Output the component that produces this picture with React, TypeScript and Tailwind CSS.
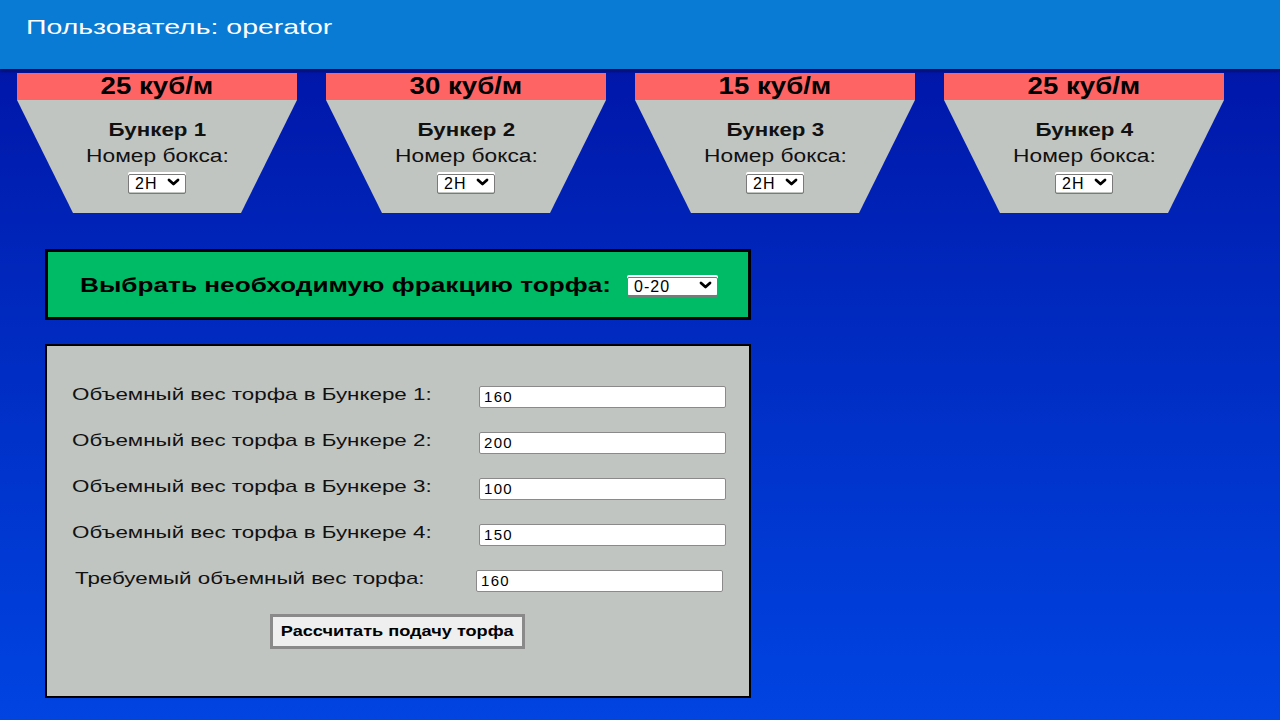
import { useState } from "react";

const bunkers = [
    { id: 1, volume: 25 },
    { id: 2, volume: 30 },
    { id: 3, volume: 15 },
    { id: 4, volume: 25 },
];

const weights = ["160", "200", "100", "150"];

const Chevron = () => (
    <svg
        width="13"
        height="8"
        viewBox="0 0 13 8"
        fill="none"
        stroke="currentColor"
        strokeWidth="2.8"
        strokeLinecap="round"
        strokeLinejoin="round"
        aria-hidden
    >
        <path d="M2 2 6.5 6 11 2" />
    </svg>
);

type SelectProps = {
    value: string;
    options: string[];
    onChange: (v: string) => void;
    className: string;
};

const NativeSelect = ({ value, options, onChange, className }: SelectProps) => (
    <div className={"relative rounded-[2px] bg-white " + className}>
        <select
            value={value}
            onChange={(e) => onChange(e.target.value)}
            className="h-full w-full cursor-pointer appearance-none rounded-[2px] border border-[#7a7a7a] bg-transparent pl-[6px] text-[16px] leading-none tracking-[1px] text-black outline-none"
        >
            {options.map((o) => (
                <option key={o} value={o}>
                    {o}
                </option>
            ))}
        </select>
        <span className="pointer-events-none absolute right-[6px] top-1/2 -translate-y-1/2 text-black">
            <Chevron />
        </span>
    </div>
);

const Bunker = ({ id, volume }: { id: number; volume: number }) => {
    const [box, setBox] = useState("2H");
    return (
        <div className="flex w-[280px] flex-col">
            <div className="h-[27px] bg-[#ff6464] text-center text-[23px] font-bold leading-[27px] text-black">
                <span className="inline-block scale-x-[1.2]">{volume} куб/м</span>
            </div>
            <div className="flex h-[113px] flex-col items-center bg-[#c1c5c1] pt-[18px] [clip-path:polygon(0_0,100%_0,80%_100%,20%_100%)]">
                <div className="text-[18px] font-bold leading-[24px] text-[#111]">
                    <span className="inline-block scale-x-[1.24]">Бункер {id}</span>
                </div>
                <div className="mt-[2px] text-[18px] leading-[24px] text-[#111]">
                    <span className="inline-block scale-x-[1.265]">Номер бокса:</span>
                </div>
                <NativeSelect
                    value={box}
                    options={["2H", "3H", "4H"]}
                    onChange={setBox}
                    className="mt-[4px] h-[20px] w-[58px]"
                />
            </div>
        </div>
    );
};

const Field = ({ label, value, shift }: { label: string; value: string; shift?: boolean }) => (
    <div className={"flex items-center " + (shift ? "pl-[28px]" : "pl-[25px]")}>
        <label className={"text-[17px] leading-[22px] text-[#111] " + (shift ? "w-[401px]" : "w-[407px]")}>
            <span className="inline-block origin-left -translate-y-[2px] scale-x-[1.315]">{label}</span>
        </label>
        <input
            defaultValue={value}
            className="h-[22px] w-[247px] rounded-[2px] border border-[#8a8a8a] bg-white px-[4px] text-[15px] tracking-[1.3px] text-black outline-none"
        />
    </div>
);

export default function App() {
    const [fraction, setFraction] = useState("0-20");

    return (
        <div className="min-h-screen bg-gradient-to-b from-[#0010a4] to-[#0044e2] pb-[22px] font-['Liberation_Sans',Arial,sans-serif]">
            <header className="flex h-[69px] items-start bg-[#0a7bd4] pl-[26px] pt-[13px] shadow-[0_2px_3px_rgba(0,0,30,0.6)]">
                <h1 className="text-[21px] leading-[28px] text-white">
                    <span className="inline-block origin-left scale-x-[1.354]">Пользователь: operator</span>
                </h1>
            </header>

            <div className="mt-[4px] flex gap-[29px] pl-[17px]">
                {bunkers.map((b) => (
                    <Bunker key={b.id} id={b.id} volume={b.volume} />
                ))}
            </div>

            <div className="ml-[45px] mt-[36px] flex h-[71px] w-[706px] items-center border-[3px] border-black bg-[#00bb66] pl-[32px]">
                <span className="w-[547px] text-[20px] font-bold text-black">
                    <span className="inline-block origin-left scale-x-[1.31]">Выбрать необходимую фракцию торфа:</span>
                </span>
                <NativeSelect
                    value={fraction}
                    options={["0-20", "0-40", "10-40"]}
                    onChange={setFraction}
                    className="h-[20px] w-[91px]"
                />
            </div>

            <div className="ml-[45px] mt-[24px] flex h-[354px] w-[706px] flex-col gap-[24px] border-2 border-black bg-[#c1c5c1] pt-[40px]">
                {weights.map((w, i) => (
                    <Field key={i} label={`Объемный вес торфа в Бункере ${i + 1}:`} value={w} />
                ))}
                <Field label="Требуемый объемный вес торфа:" value="160" shift />
                <div className="-mt-[2px] flex justify-center pr-[2px]">
                    <button
                        type="button"
                        className="h-[35px] w-[255px] border-[3px] border-[#8a8a8a] bg-[#efefef] text-[15px] font-bold text-black"
                    >
                        <span className="inline-block scale-x-[1.21]">Рассчитать подачу торфа</span>
                    </button>
                </div>
            </div>
        </div>
    );
}
